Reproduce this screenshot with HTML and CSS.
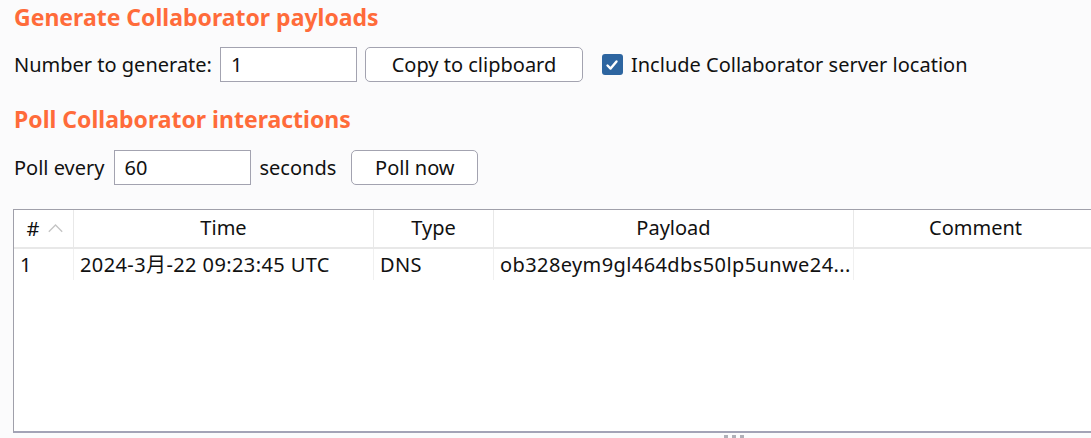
FILE: index.html
```html
<!DOCTYPE html>
<html>
<head>
<meta charset="utf-8">
<link rel="stylesheet" href="styles.css">
</head>
<body>
<div class="page">
  <h2 class="title">Generate Collaborator payloads</h2>
  <div class="row row-gen">
    <span class="label">Number to generate:</span>
    <div class="field field-gen">1</div>
    <button class="btn btn-copy">Copy to clipboard</button>
    <label class="check">
      <span class="box"><svg width="14" height="14" viewBox="0 0 14 14"><path d="M2.5 7.5 L5.6 10.6 L11.5 3.4" fill="none" stroke="#fff" stroke-width="2.4" stroke-linecap="round" stroke-linejoin="round"/></svg></span>
      <span class="label">Include Collaborator server location</span>
    </label>
  </div>
  <h2 class="title title-poll">Poll Collaborator interactions</h2>
  <div class="row row-poll">
    <span class="label">Poll every</span>
    <div class="field field-poll">60</div>
    <span class="label">seconds</span>
    <button class="btn btn-poll">Poll now</button>
  </div>
  <div class="table-wrap">
    <div class="grid head">
      <div class="cell c-num">#<svg class="sort" width="15" height="10" viewBox="0 0 15 10"><path d="M0.8 8.8 L7.5 2 L14.2 8.8" fill="none" stroke="#c4c4c4" stroke-width="1.3"/></svg></div>
      <div class="cell">Time</div>
      <div class="cell">Type</div>
      <div class="cell">Payload</div>
      <div class="cell">Comment</div>
    </div>
    <div class="grid body-row">
      <div class="cell">1</div>
      <div class="cell">2024-3月-22 09:23:45 UTC</div>
      <div class="cell">DNS</div>
      <div class="cell">ob328eym9gl464dbs50lp5unwe24...</div>
      <div class="cell"></div>
    </div>
  </div>
  <div class="grip"><span></span><span></span><span></span></div>
</div>
</body>
</html>
```
FILE: styles.css
```css
html, body {
  margin: 0;
  padding: 0;
  background: #fbfbfc;
  overflow: hidden;
}
body {
  width: 1091px;
  height: 438px;
  font-family: "Noto Sans", "Noto Sans CJK SC", sans-serif;
  font-size: 20px;
  color: #111;
}
.page {
  padding: 0 0 0 14px;
  position: relative;
  height: 438px;
}
.title {
  margin: 0;
  padding-top: 2px;
  height: 30px;
  line-height: 30px;
  font-size: 23px;
  font-weight: bold;
  color: #ff6b3a;
}
.row {
  display: flex;
  align-items: center;
  height: 35px;
}
.row-gen { margin-top: 15px; }
.title-poll { margin-top: 20px; }
.row-poll { margin-top: 16px; }
.label { white-space: nowrap; }
.field {
  box-sizing: border-box;
  height: 35px;
  border: 1px solid #a3a3b0;
  background: #fff;
  padding-left: 10px;
  line-height: 33px;
}
.field-gen { width: 137px; margin-left: 8px; }
.field-poll { width: 137px; margin-left: 9px; margin-right: 9px; }
.btn {
  box-sizing: border-box;
  height: 35px;
  border: 1px solid #a3a3b0;
  border-radius: 5px;
  background: #fff;
  font: inherit;
  color: #111;
  padding: 0;
}
.btn-copy { width: 218px; margin-left: 8px; }
.btn-poll { width: 127px; margin-left: 15px; }
.check {
  display: flex;
  align-items: center;
  margin-left: 19px;
}
.box {
  box-sizing: border-box;
  width: 21px;
  height: 21px;
  border-radius: 3px;
  background: #2d65a0;
  display: flex;
  align-items: center;
  justify-content: center;
  margin-right: 8px;
}
.table-wrap {
  margin-top: 24px;
  margin-left: -1px;
  width: 1085px;
  height: 224px;
  box-sizing: border-box;
  background: #fff;
  border-top: 1px solid #a0a0aa;
  border-left: 1px solid #a0a0aa;
  border-bottom: 2px solid #a3a3b6;
}
.grid {
  display: grid;
  grid-template-columns: 60px 300px 120px 360px 1fr;
}
.head {
  height: 37px;
  border-bottom: 2px solid #e8e8e8;
}
.head .cell {
  text-align: center;
  line-height: 36px;
  border-right: 1px solid #e8e8e8;
}
.c-num {
  display: flex;
  align-items: center;
  justify-content: center;
  gap: 9px;
  padding-left: 3px;
}
.sort { margin-top: -1px; }
.body-row { height: 31px; }
.body-row .cell {
  line-height: 31px;
  padding-left: 6px;
  white-space: nowrap;
  letter-spacing: 0.4px;
  border-right: 1px solid #f0f0f0;
}
.grip {
  position: absolute;
  left: 724px;
  top: 435px;
  display: flex;
  gap: 4px;
}
.grip span {
  width: 4px;
  height: 4px;
  background: #b0b0b8;
}
```
